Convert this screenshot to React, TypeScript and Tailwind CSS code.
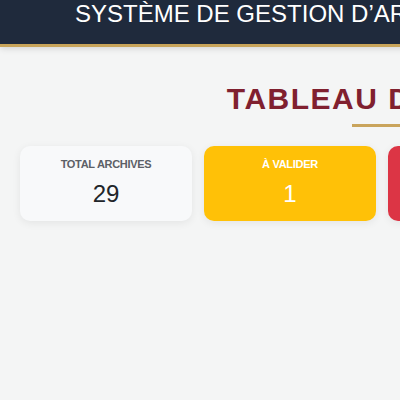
import React from "react";

const cards = [
  { label: "TOTAL ARCHIVES", value: "29", cls: "bg-[#f8f9fa] text-[#212529]", labelCls: "text-[#5c6066]" },
  { label: "À VALIDER", value: "1", cls: "bg-[#ffc107] text-white", labelCls: "text-white" },
  { label: "REJETÉES", value: "0", cls: "bg-[#dc3545] text-white", labelCls: "text-white" },
  { label: "VALIDÉES", value: "28", cls: "bg-[#198754] text-white", labelCls: "text-white" },
];

export default function App() {
  return (
    <div className="w-[400px] h-[400px] overflow-hidden bg-[#f4f5f5] font-['Liberation_Sans',Arial,sans-serif]">
      <div className="w-[784px]">
        <header className="h-[47px] bg-[#1f2a3c] border-b-[3px] border-[#c8a45a] shadow-[0_2px_6px_rgba(0,0,0,0.12)] pl-[75px] pt-[2px]">
          <h1 className="text-[24px] leading-none text-white whitespace-nowrap">SYSTÈME DE GESTION D’ARCHIVES</h1>
        </header>
        <main className="px-5 pt-[34px]">
          <div className="flex flex-col items-center">
            <h2 className="pr-[20px] text-[30px] leading-[36px] font-bold tracking-[1.5px] text-[#80202f] whitespace-nowrap">TABLEAU DE BORD</h2>
            <div className="mt-[7px] h-[3px] w-20 bg-[#c9a45c]" />
          </div>
          <div className="mt-[19px] grid grid-cols-[repeat(4,172px)] gap-3">
            {cards.map((c) => (
              <div
                key={c.label}
                className={`h-[75px] rounded-[10px] pt-[10px] flex flex-col items-center shadow-[0_2px_8px_rgba(0,0,0,0.07)] ${c.cls}`}
              >
                <div className={`text-[11px] leading-4 font-bold tracking-[-0.3px] ${c.labelCls}`}>{c.label}</div>
                <div className="mt-[6px] text-[24px] leading-8">{c.value}</div>
              </div>
            ))}
          </div>
        </main>
      </div>
    </div>
  );
}
